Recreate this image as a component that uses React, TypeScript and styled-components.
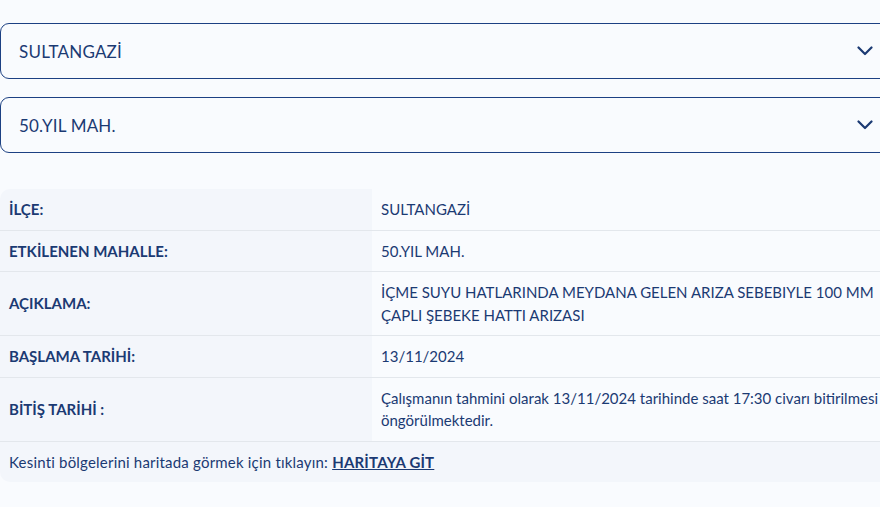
import styled, { createGlobalStyle } from 'styled-components';

const GlobalStyle = createGlobalStyle`
  html, body {
    margin: 0;
    padding: 0;
    background: #f9fbfe;
    overflow: hidden;
  }
  body {
    font-family: 'Lato', 'Open Sans', sans-serif;
    color: #1b3a73;
  }
`;

const Page = styled.div`
  width: 895px;
  padding-top: 23px;
  display: flex;
  flex-direction: column;
`;

const SelectBox = styled.div`
  height: 54px;
  border: 1px solid #1d4183;
  border-radius: 9px;
  display: flex;
  align-items: center;
  justify-content: space-between;
  padding: 0 21px 0 18px;
  margin-bottom: 18px;
  font-size: 17px;
  letter-spacing: 0.2px;
  color: #1b3a73;
`;

const Chevron = () => (
  <svg width="16" height="10" viewBox="0 0 16 10" fill="none">
    <path d="M1.5 1.5 L8 8 L14.5 1.5" stroke="#1b3a73" strokeWidth="2.2" strokeLinecap="round" strokeLinejoin="round" />
  </svg>
);

const Table = styled.div`
  margin-top: 18px;
  border-radius: 10px 0 0 10px;
  overflow: hidden;
  background: #f9fbfe;
  font-size: 15px;
  line-height: 22.5px;
`;

const Row = styled.div`
  display: grid;
  grid-template-columns: 372px 1fr;
  border-bottom: 1px solid #e3e7ec;
`;

const Label = styled.div`
  background: #f3f6fb;
  padding: 9px 9px;
  font-weight: 700;
  display: flex;
  align-items: center;
`;

const Value = styled.div`
  padding: 9px 9px;
  display: flex;
  align-items: center;
`;

const Footer = styled.div`
  background: #f3f6fb;
  padding: 9px 9px;
  line-height: 22px;
  letter-spacing: 0.2px;
`;

const MapLink = styled.a`
  font-weight: 700;
  color: #1b3a73;
  text-decoration: underline;
`;

const rows: [string, string][] = [
  ['İLÇE:', 'SULTANGAZİ'],
  ['ETKİLENEN MAHALLE:', '50.YIL MAH.'],
  ['AÇIKLAMA:', 'İÇME SUYU HATLARINDA MEYDANA GELEN ARIZA SEBEBIYLE 100 MM ÇAPLI ŞEBEKE HATTI ARIZASI'],
  ['BAŞLAMA TARİHİ:', '13/11/2024'],
  ['BİTİŞ TARİHİ :', 'Çalışmanın tahmini olarak 13/11/2024 tarihinde saat 17:30 civarı bitirilmesi öngörülmektedir.'],
];

export default function App() {
  return (
    <Page>
      <GlobalStyle />
      <SelectBox>
        <span>SULTANGAZİ</span>
        <Chevron />
      </SelectBox>
      <SelectBox>
        <span>50.YIL MAH.</span>
        <Chevron />
      </SelectBox>
      <Table>
        {rows.map(([label, value]) => (
          <Row key={label}>
            <Label>{label}</Label>
            <Value>{value}</Value>
          </Row>
        ))}
        <Footer>
          Kesinti bölgelerini haritada görmek için tıklayın: <MapLink href="#">HARİTAYA GİT</MapLink>
        </Footer>
      </Table>
    </Page>
  );
}
